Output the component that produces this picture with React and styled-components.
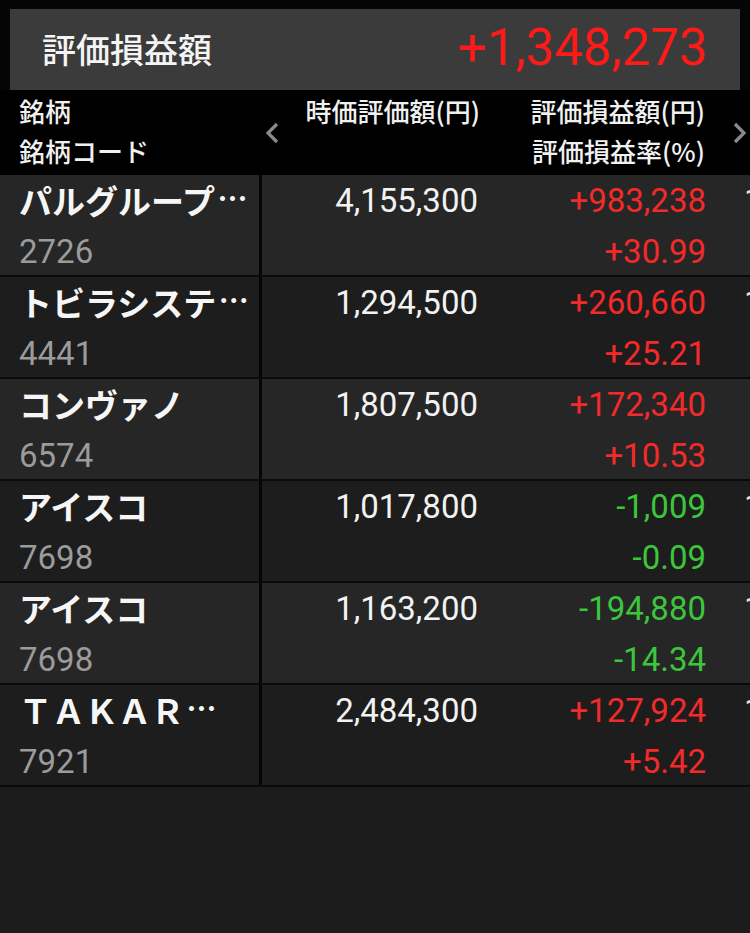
import React from 'react'
import styled, { createGlobalStyle } from 'styled-components'

const GlobalStyle = createGlobalStyle`
  body {
    margin: 0;
    background: #1c1c1c;
    font-family: Roboto, "Noto Sans CJK JP", sans-serif;
  }
`

const holdings = [
  { name: 'パルグループ', more: true, code: '2726', value: '4,155,300', pl: '+983,238', rate: '+30.99' },
  { name: 'トビラシステ', more: true, code: '4441', value: '1,294,500', pl: '+260,660', rate: '+25.21' },
  { name: 'コンヴァノ', code: '6574', value: '1,807,500', pl: '+172,340', rate: '+10.53' },
  { name: 'アイスコ', code: '7698', value: '1,017,800', pl: '-1,009', rate: '-0.09' },
  { name: 'アイスコ', code: '7698', value: '1,163,200', pl: '-194,880', rate: '-14.34' },
  { name: 'ＴＡＫＡＲ', more: true, code: '7921', value: '2,484,300', pl: '+127,924', rate: '+5.42' },
]

const Chevron = ({ dir }) => (
  <svg width="16" height="24" viewBox="0 0 16 24">
    <path
      d={dir === 'left' ? 'M13 3 L4 12 L13 21' : 'M3 3 L12 12 L3 21'}
      fill="none"
      stroke="#8a8a8a"
      strokeWidth="3.2"
    />
  </svg>
)

export default function App() {
  return (
    <Page>
      <GlobalStyle />
      <Top>
        <Summary>
          <SummaryTitle>評価損益額</SummaryTitle>
          <SummaryTotal>+1,348,273</SummaryTotal>
        </Summary>
      </Top>

      <Header>
        <HeadCell>
          <div>銘柄</div>
          <div>銘柄コード</div>
        </HeadCell>
        <ArrowCell><Chevron dir="left" /></ArrowCell>
        <HeadCell $right>
          <div>時価評価額(円)</div>
        </HeadCell>
        <HeadCell $right>
          <div>評価損益額(円)</div>
          <div>評価損益率(%)</div>
        </HeadCell>
        <ArrowCell $end><Chevron dir="right" /></ArrowCell>
      </Header>

      {holdings.map((h, i) => {
        const up = h.pl.startsWith('+')
        return (
          <Row key={i} $odd={i % 2 === 0}>
            <NameCell>
              <Name>
                {h.name}
                {h.more && <Dots>•••</Dots>}
              </Name>
              <Code>{h.code}</Code>
            </NameCell>
            <NumCell>
              <div>{h.value}</div>
            </NumCell>
            <NumCell $up={up}>
              <div>{h.pl}</div>
              <div>{h.rate}</div>
            </NumCell>
            <Peek>{i === 2 ? '' : '1,0'}</Peek>
          </Row>
        )
      })}
    </Page>
  )
}

const Page = styled.div`
  width: 750px;
  min-height: 933px;
  background: #1c1c1c;
  overflow: hidden;
`

const Top = styled.div`
  background: #050505;
  padding: 9px 10px 0;
`

const Summary = styled.div`
  height: 81px;
  background: #3b3b3b;
  display: flex;
  align-items: center;
  justify-content: space-between;
  padding: 0 32px 0 32px;
`

const SummaryTitle = styled.div`
  font-family: "Noto Sans CJK JP", sans-serif;
  font-weight: 500;
  font-size: 34px;
  color: #f4f4f4;
  margin-top: -2px;
`

const SummaryTotal = styled.div`
  font-family: Roboto, sans-serif;
  font-size: 51px;
  color: #ff1a1a;
  margin-top: -4px;
`

const Header = styled.div`
  height: 85px;
  background: #000;
  display: grid;
  grid-template-columns: 250px 44px 186px 225px 1fr;
  align-items: center;
`

const HeadCell = styled.div`
  font-family: "Noto Sans CJK JP", sans-serif;
  font-weight: 500;
  font-size: 26px;
  color: #f0f0f0;
  line-height: 40px;
  padding-left: ${p => (p.$right ? 0 : 19)}px;
  text-align: ${p => (p.$right ? 'right' : 'left')};
  align-self: start;
  padding-top: 1px;
`

const ArrowCell = styled.div`
  display: flex;
  justify-content: ${p => (p.$end ? 'flex-end' : 'center')};
  padding-right: ${p => (p.$end ? 2 : 0)}px;
`

const Row = styled.div`
  height: 100px;
  border-bottom: 2px solid #0a0a0a;
  background: ${p => (p.$odd ? '#262626' : '#1d1d1d')};
  display: grid;
  grid-template-columns: 262px 216px 228px 1fr;
  line-height: 51px;
  overflow: hidden;
`

const NameCell = styled.div`
  border-right: 3px solid #050505;
  padding-left: 19px;
  white-space: nowrap;
  overflow: hidden;
`

const Name = styled.div`
  font-family: "Noto Sans CJK JP", sans-serif;
  font-weight: 700;
  font-size: 33px;
  color: #f6f6f6;
`

const Dots = styled.span`
  font-family: "DejaVu Sans", sans-serif;
  font-size: 14px;
  line-height: 0;
  letter-spacing: 1px;
  vertical-align: 0.75em;
  margin-left: 3px;
`

const Code = styled.div`
  font-family: Roboto, sans-serif;
  font-size: 33px;
  color: #9b9b9b;
`

const NumCell = styled.div`
  font-family: Roboto, sans-serif;
  font-size: 33px;
  text-align: right;
  color: ${p => (p.$up === undefined ? '#f2f2f2' : p.$up ? '#f42a2a' : '#3cc63c')};
`

const Peek = styled.div`
  font-family: Roboto, sans-serif;
  font-size: 33px;
  color: #e0e0e0;
  padding-left: 38px;
  white-space: nowrap;
  overflow: hidden;
`
